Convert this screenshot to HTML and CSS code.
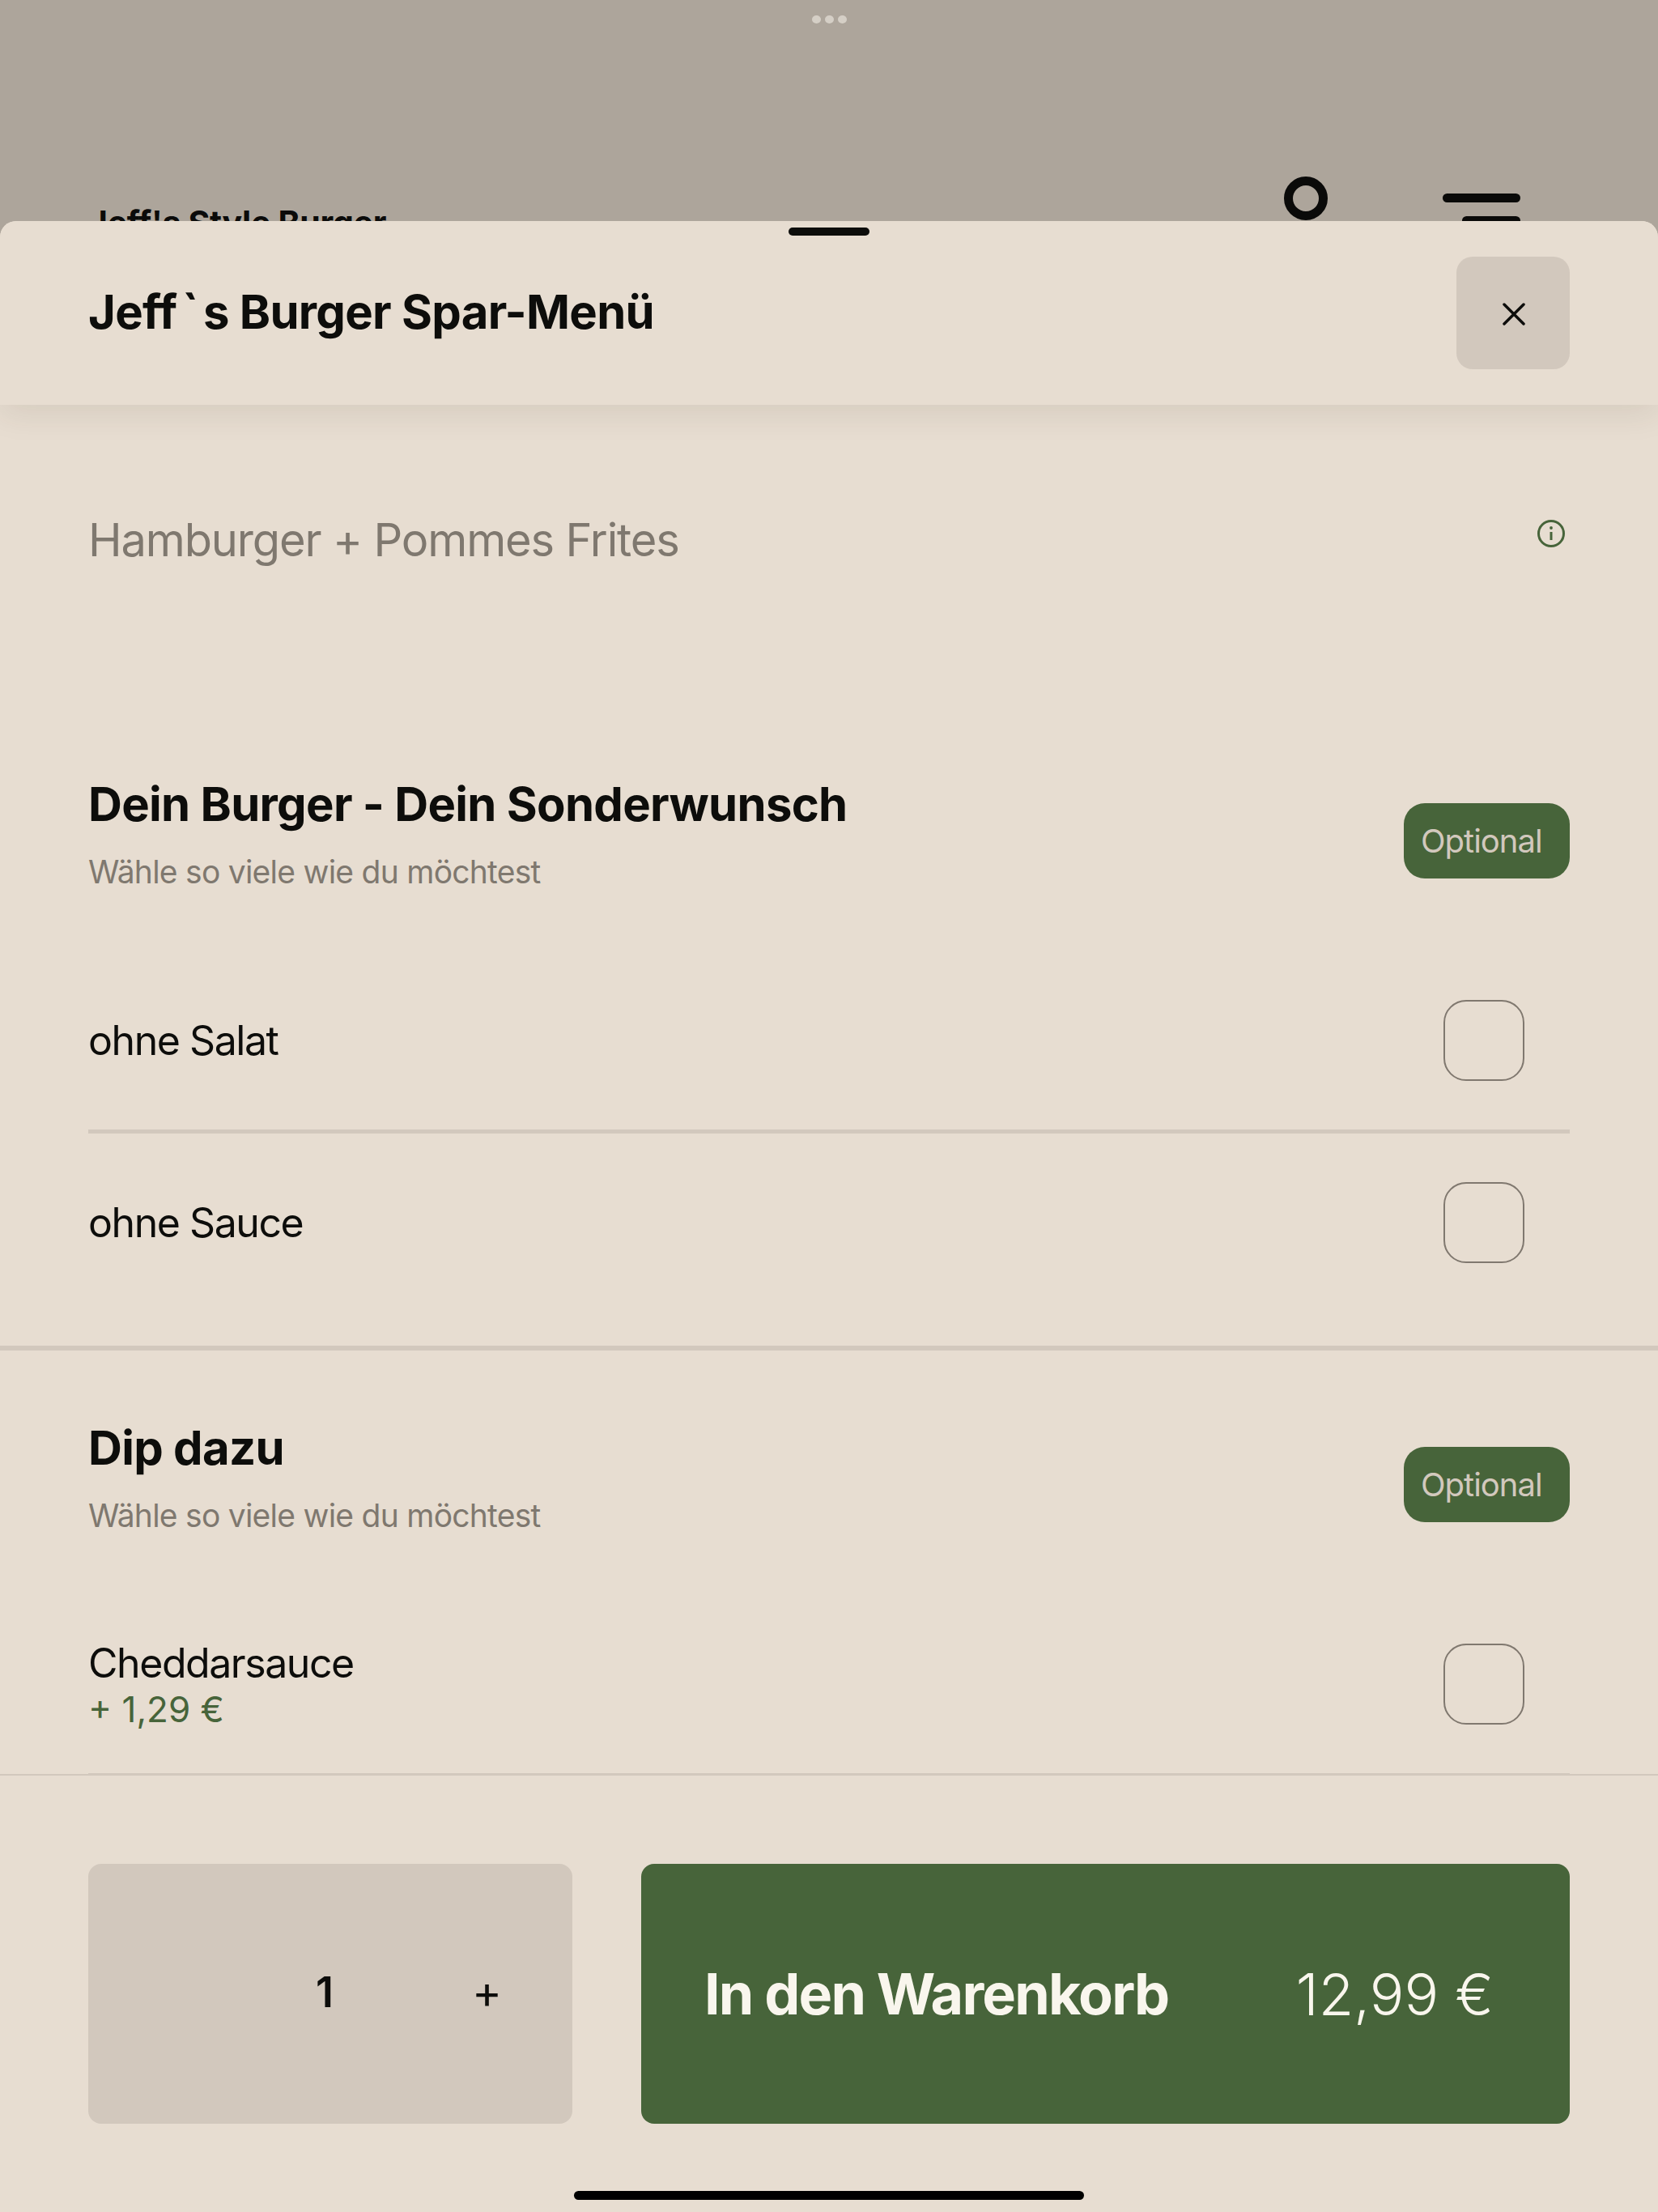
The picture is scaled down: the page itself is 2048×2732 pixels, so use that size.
FILE: index.html
```html
<!DOCTYPE html>
<html lang="de">
<head>
<meta charset="utf-8">
<title>Jeff`s Burger Spar-Menü</title>
<link rel="stylesheet" href="styles.css">
</head>
<body>
<div class="page">
  <div class="backdrop">
    <div class="dots"><span></span><span></span><span></span></div>
    <div class="shop-name">Jeff's Style Burger</div>
    <div class="shop-ring"></div>
    <div class="shop-burger"><span class="bar-long"></span><span class="bar-short"></span></div>
  </div>
  <div class="sheet">
    <div class="handle"></div>
    <header class="sheet-head">
      <h1 class="sheet-title">Jeff<span class="tick">`</span>s Burger Spar-Menü</h1>
      <button class="close-btn" aria-label="Schließen">
        <svg class="close-icon" viewBox="0 0 28 28"><path d="M2 2 L26 26 M26 2 L2 26"/></svg>
      </button>
    </header>
    <main class="sheet-body">
      <div class="intro">
        <p class="intro-text">Hamburger + Pommes Frites</p>
        <svg class="info-icon" viewBox="0 0 34 34"><circle cx="17" cy="17" r="15.5"/><path d="M17 15 V25"/><circle class="info-dot" cx="17" cy="10" r="1.9"/></svg>
      </div>
      <section class="group group-first">
        <div class="group-head">
          <div class="group-titles">
            <h2 class="group-title">Dein Burger - Dein Sonderwunsch</h2>
            <p class="group-hint">Wähle so viele wie du möchtest</p>
          </div>
          <span class="badge">Optional</span>
        </div>
        <div class="option option-lined">
          <div class="option-text"><span class="option-name">ohne Salat</span></div>
          <span class="checkbox"></span>
        </div>
        <div class="option">
          <div class="option-text"><span class="option-name">ohne Sauce</span></div>
          <span class="checkbox"></span>
        </div>
      </section>
      <section class="group">
        <div class="group-head">
          <div class="group-titles">
            <h2 class="group-title">Dip dazu</h2>
            <p class="group-hint">Wähle so viele wie du möchtest</p>
          </div>
          <span class="badge">Optional</span>
        </div>
        <div class="option option-end">
          <div class="option-text"><span class="option-name">Cheddarsauce</span><span class="option-price">+ 1,29 €</span></div>
          <span class="checkbox"></span>
        </div>
      </section>
    </main>
    <footer class="sheet-foot">
      <div class="qty"><span class="qty-value">1</span><span class="qty-plus">+</span></div>
      <button class="cart-btn"><span class="cart-label">In den Warenkorb</span><span class="cart-price">12,99 €</span></button>
    </footer>
    <div class="home-bar"></div>
  </div>
</div>
</body>
</html>
```
FILE: styles.css
```css
* { box-sizing: border-box; }
html, body { margin: 0; padding: 0; }
body {
  width: 2048px;
  height: 2732px;
  overflow: hidden;
  background: #ada59b;
  font-family: Inter, "Liberation Sans", sans-serif;
  color: #0d0d0b;
}
.page { display: flex; flex-direction: column; height: 2732px; }

.backdrop {
  position: relative;
  height: 273px;
  flex: none;
  overflow: hidden;
  display: flex;
  align-items: flex-start;
  padding: 218px 109px 0 109px;
}
.dots {
  position: absolute;
  top: 19px;
  left: 1003px;
  display: flex;
  gap: 5px;
}
.dots span { width: 11px; height: 10px; border-radius: 50%; background: #d5cfc6; }
.shop-name {
  margin-top: 33px;
  font-size: 41px;
  line-height: 48px;
  font-weight: 700;
  letter-spacing: -0.3px;
  color: #0b0b0a;
}
.shop-ring {
  margin-left: auto;
  width: 54px;
  height: 54px;
  border: 11px solid #0a0a09;
  border-radius: 50%;
}
.shop-burger {
  margin-left: 142px;
  margin-right: 61px;
  margin-top: 21px;
  width: 96px;
  display: flex;
  flex-direction: column;
  align-items: flex-end;
  gap: 17px;
}
.shop-burger span { display: block; height: 11px; border-radius: 6px; background: #0a0a09; }
.bar-long { width: 96px; }
.bar-short { width: 72px; }

.sheet {
  position: relative;
  flex: 1;
  min-height: 0;
  display: flex;
  flex-direction: column;
  overflow: hidden;
  background: #e7ddd1;
  border-radius: 20px 20px 0 0;
}
.handle {
  position: absolute;
  top: 8px;
  left: 974px;
  width: 100px;
  height: 10px;
  border-radius: 5px;
  background: #0d0d0b;
  z-index: 3;
}
.sheet-head {
  position: relative;
  z-index: 2;
  flex: none;
  height: 227px;
  display: flex;
  align-items: flex-start;
  justify-content: space-between;
  padding: 44px 109px 0;
  background: #e7ddd1;
  box-shadow: 0 10px 36px rgba(60, 45, 25, 0.1);
}
.sheet-title {
  margin: 34px 0 0;
  font-size: 58px;
  line-height: 68px;
  font-weight: 700;
  letter-spacing: -0.7px;
}
.tick { margin: 0 6px; }
.close-btn {
  width: 140px;
  height: 139px;
  padding: 0;
  border: 0;
  border-radius: 20px;
  background: #d2c8bd;
  display: flex;
  align-items: center;
  justify-content: center;
}
.close-icon { width: 28px; height: 28px; margin: 2px 0 0 1px; fill: none; stroke: #0d0d0b; stroke-width: 3.5; stroke-linecap: round; }

.sheet-body { flex: 1; min-height: 0; overflow: hidden; }
.intro {
  display: flex;
  justify-content: space-between;
  align-items: flex-start;
  padding: 133px 109px 0;
  height: 492px;
}
.intro-text {
  margin: 0;
  font-size: 56px;
  line-height: 68px;
  letter-spacing: -1.15px;
  color: #7f786f;
}
.info-icon {
  margin: 9px 6px 0 0;
  width: 34px;
  height: 34px;
  fill: none;
  stroke: #47643a;
  stroke-width: 3;
}
.info-dot { fill: #47643a; stroke: none; }

.group { padding: 119px 109px 0; border-top: 6px solid #d2c8bd; }
.group-first { padding: 0 109px 42px; border-top: 0; }
.group-head {
  height: 93px;
  display: flex;
  align-items: center;
  justify-content: space-between;
}
.group-titles { display: flex; flex-direction: column; gap: 26px; margin-top: -18px; }
.group-title { margin: 0; font-size: 58px; line-height: 68px; font-weight: 700; letter-spacing: -0.7px; }
.group-hint { margin: 0; font-size: 39px; line-height: 48px; letter-spacing: -0.75px; color: #7f786f; }
.badge {
  flex: none;
  width: 205px;
  height: 93px;
  padding-left: 21px;
  border-radius: 26px;
  background: #47643a;
  color: #d2c8bd;
  font-size: 40px;
  letter-spacing: -1px;
  line-height: 93px;
}
.option {
  height: 220px;
  display: flex;
  align-items: center;
  justify-content: space-between;
  padding-right: 56px;
}
.group-head + .option { margin-top: 90px; }
.option-lined { height: 225px; border-bottom: 5px solid #d2c8bd; }
.option-end { height: 223px; border-bottom: 3px solid #d2c8bd; }
.option-end .option-text { margin-top: 1px; }
.option-text { display: flex; flex-direction: column; }
.option-name { font-size: 50px; line-height: 60px; letter-spacing: -1.45px; margin-top: -1px; }
.option-price { font-size: 44px; line-height: 52px; margin-top: 1px; color: #47643a; }
.checkbox {
  width: 100px;
  height: 100px;
  border: 2px solid #80786f;
  border-radius: 28px;
}

.sheet-foot {
  flex: none;
  height: 541px;
  display: flex;
  gap: 85px;
  align-items: flex-start;
  padding: 109px 109px 0;
  background: #e7ddd1;
  border-top: 2px solid #d2c8bd;
}
.qty {
  flex: none;
  width: 598px;
  height: 321px;
  border-radius: 16px;
  background: #d2c8bd;
  display: flex;
  align-items: center;
  padding-left: 281px;
}
.qty-value { font-size: 52px; line-height: 60px; font-weight: 600; margin-top: -4px; }
.qty-plus { margin-left: 171px; font-size: 56px; line-height: 60px; margin-top: -6px; }
.cart-btn {
  flex: 1;
  height: 321px;
  padding: 0 94px 0 78px;
  border: 0;
  border-radius: 16px;
  background: #47643a;
  color: #f9f6ed;
  font-family: inherit;
  display: flex;
  align-items: center;
  justify-content: space-between;
}
.cart-label { font-size: 70px; font-weight: 700; letter-spacing: -1.85px; }
.cart-price { font-size: 71px; font-weight: 300; }
.home-bar {
  position: absolute;
  left: 709px;
  bottom: 15px;
  width: 630px;
  height: 11px;
  border-radius: 6px;
  background: #000;
}
```
